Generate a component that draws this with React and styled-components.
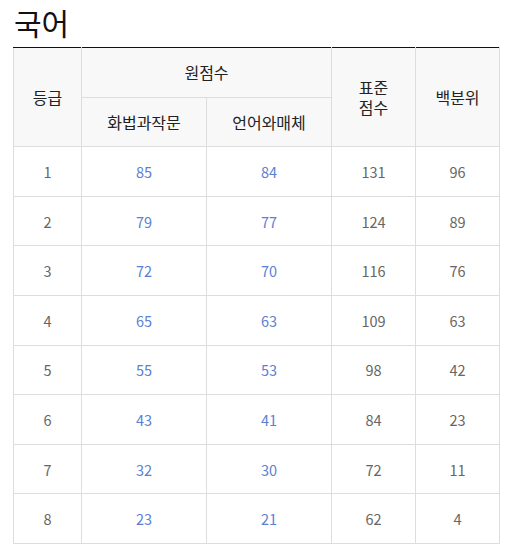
import React from 'react'
import styled, { createGlobalStyle } from 'styled-components'

const GlobalStyle = createGlobalStyle`
  body {
    margin: 0;
    background: #fff;
    font-family: "Noto Sans CJK KR", "Noto Sans", sans-serif;
  }
`

const Page = styled.div`
  padding: 0 27px 0 13px;
`

const Title = styled.h2`
  margin: 0;
  padding: 0 0 0 1px;
  height: 47px;
  font-size: 30px;
  font-weight: 400;
  line-height: 44px;
  color: #111;
`

const Table = styled.table`
  width: 486px;
  border-collapse: collapse;
  border-top: 1px solid #111;
  table-layout: fixed;
`

const Head = styled.th`
  background: #f8f8f8;
  border: 1px solid #ddd;
  border-top: ${p => (p.top ? '1px solid #111' : '1px solid #ddd')};
  font-size: 16px;
  font-weight: 400;
  color: #222;
  line-height: 20px;
  padding: 0;
  height: 48.6px;
`

const Stack = styled.span`
  display: block;
  line-height: 20px;
`

const Cell = styled.td`
  border: 1px solid #ddd;
  text-align: center;
  font-size: 14.5px;
  color: ${p => (p.raw ? '#5b80d4' : '#666')};
  padding: 0;
  height: 48.6px;
`

const rows = [
  [1, 85, 84, 131, 96],
  [2, 79, 77, 124, 89],
  [3, 72, 70, 116, 76],
  [4, 65, 63, 109, 63],
  [5, 55, 53, 98, 42],
  [6, 43, 41, 84, 23],
  [7, 32, 30, 72, 11],
  [8, 23, 21, 62, 4],
]

export default function App() {
  return (
    <Page>
      <GlobalStyle />
      <Title>국어</Title>
      <Table>
        <colgroup>
          <col style={{ width: 68 }} />
          <col style={{ width: 125 }} />
          <col style={{ width: 125 }} />
          <col style={{ width: 84 }} />
          <col style={{ width: 84 }} />
        </colgroup>
        <thead>
          <tr>
            <Head top rowSpan={2}>등급</Head>
            <Head top colSpan={2}>원점수</Head>
            <Head top rowSpan={2}>
              <Stack>표준</Stack>
              <Stack>점수</Stack>
            </Head>
            <Head top rowSpan={2}>백분위</Head>
          </tr>
          <tr>
            <Head>화법과작문</Head>
            <Head>언어와매체</Head>
          </tr>
        </thead>
        <tbody>
          {rows.map(r => (
            <tr key={r[0]}>
              <Cell>{r[0]}</Cell>
              <Cell raw>{r[1]}</Cell>
              <Cell raw>{r[2]}</Cell>
              <Cell>{r[3]}</Cell>
              <Cell>{r[4]}</Cell>
            </tr>
          ))}
        </tbody>
      </Table>
    </Page>
  )
}
